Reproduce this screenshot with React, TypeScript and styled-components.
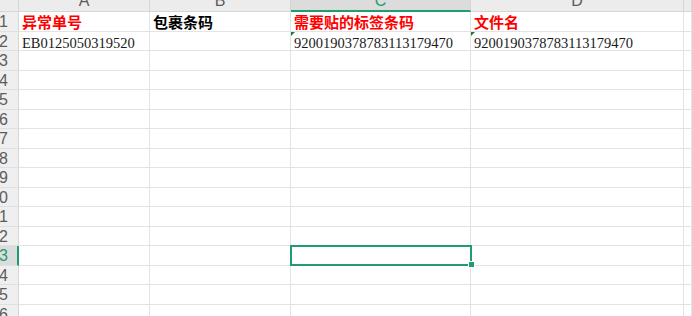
import React from "react";
import styled, { createGlobalStyle, css } from "styled-components";

const GlobalStyle = createGlobalStyle`
  html, body { margin: 0; padding: 0; background: #ffffff; }
  * { box-sizing: border-box; }
`;

const GREEN = "#1f9d6e";
const GRID = "#e3e3e3";

const Sheet = styled.div`
  display: grid;
  grid-template-columns: 19px 131px 141px 180px 213px 1fr;
  grid-template-rows: 12px repeat(16, 19.5px);
  width: 692px;
  height: 316px;
  overflow: hidden;
  background: #ffffff;
`;

const Corner = styled.div`
  background: #ececec;
  border-right: 1px solid #d6d6d6;
  border-bottom: 1px solid #d6d6d6;
`;

const ColHeader = styled.div<{ $active?: boolean }>`
  background: ${(p) => (p.$active ? "#dcdcdc" : "#ececec")};
  border-right: 1px solid #d6d6d6;
  border-bottom: ${(p) => (p.$active ? `2px solid ${GREEN}` : "1px solid #d6d6d6")};
  overflow: hidden;
  text-align: center;
  font-family: "Liberation Sans", Arial, sans-serif;
  font-size: 16px;
  color: ${(p) => (p.$active ? GREEN : "#5c5c5c")};
`;

const HeaderLetter = styled.span`
  display: block;
  line-height: 16px;
  margin-top: -7px;
`;

const RowHeader = styled.div<{ $active?: boolean }>`
  display: flex;
  justify-content: flex-end;
  align-items: flex-start;
  background: ${(p) => (p.$active ? "#dcdcdc" : "#efefef")};
  border-right: ${(p) => (p.$active ? `2px solid ${GREEN}` : "1px solid #d6d6d6")};
  border-bottom: 1px solid #e0e0e0;
  overflow: hidden;
  white-space: nowrap;
  padding-right: ${(p) => (p.$active ? "9px" : "10px")};
  padding-top: 2px;
  font-family: "Liberation Sans", Arial, sans-serif;
  font-size: 16px;
  line-height: 16px;
  color: ${(p) => (p.$active ? GREEN : "#5c5c5c")};
`;

const RowNumber = styled.span`
  flex: none;
`;

const Cell = styled.div<{ $tone?: "red" | "black"; $heading?: boolean }>`
  position: relative;
  border-right: 1px solid ${GRID};
  border-bottom: 1px solid ${GRID};
  white-space: nowrap;
  overflow: visible;
  padding: 3px 3px 0;
  font-family: "Liberation Serif", "Noto Sans CJK SC", serif;
  font-size: 14.5px;
  line-height: 16px;
  color: #1a1a1a;
  ${(p) =>
    p.$heading &&
    css`
      font-size: 15px;
      font-weight: bold;
      padding-top: 3px;
      color: ${p.$tone === "red" ? "#ff0000" : "#000000"};
    `}
`;

const TextFlag = styled.span`
  position: absolute;
  top: 0;
  left: 0;
  width: 0;
  height: 0;
  border-top: 4px solid #1d7a3c;
  border-right: 4px solid transparent;
`;

const Selection = styled.div`
  position: absolute;
  top: -1px;
  left: -1px;
  right: -2px;
  bottom: -1px;
  border: 2px solid ${GREEN};
  pointer-events: none;
  z-index: 2;
`;

const FillHandle = styled.span`
  position: absolute;
  right: -4px;
  bottom: -3px;
  width: 5px;
  height: 5px;
  background: ${GREEN};
  outline: 1px solid #ffffff;
`;

type CellData = {
  text?: string;
  heading?: boolean;
  tone?: "red" | "black";
  flag?: boolean;
};

const columns = ["A", "B", "C", "D", ""];
const ROWS = 16;
const ACTIVE_ROW = 13;
const ACTIVE_COL = 2;

const data: Record<string, CellData> = {
  "1-0": { text: "异常单号", heading: true, tone: "red" },
  "1-1": { text: "包裹条码", heading: true, tone: "black" },
  "1-2": { text: "需要贴的标签条码", heading: true, tone: "red" },
  "1-3": { text: "文件名", heading: true, tone: "red" },
  "2-0": { text: "EB0125050319520" },
  "2-2": { text: "9200190378783113179470", flag: true },
  "2-3": { text: "9200190378783113179470", flag: true },
};

export default function App() {
  const rows = Array.from({ length: ROWS }, (_, i) => i + 1);
  return (
    <>
      <GlobalStyle />
      <Sheet>
        <Corner />
        {columns.map((c, i) => (
          <ColHeader key={`h-${i}`} $active={i === ACTIVE_COL}>
            <HeaderLetter>{c}</HeaderLetter>
          </ColHeader>
        ))}
        {rows.map((r) => (
          <React.Fragment key={r}>
            <RowHeader $active={r === ACTIVE_ROW}>
              <RowNumber>{r}</RowNumber>
            </RowHeader>
            {columns.map((_, ci) => {
              const d = data[`${r}-${ci}`];
              const selected = r === ACTIVE_ROW && ci === ACTIVE_COL;
              return (
                <Cell key={ci} $heading={d?.heading} $tone={d?.tone}>
                  {d?.flag && <TextFlag />}
                  {d?.text}
                  {selected && (
                    <Selection>
                      <FillHandle />
                    </Selection>
                  )}
                </Cell>
              );
            })}
          </React.Fragment>
        ))}
      </Sheet>
    </>
  );
}
